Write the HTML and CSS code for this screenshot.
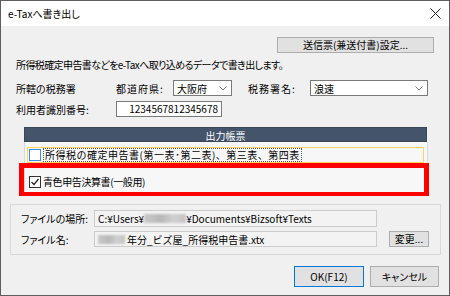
FILE: index.html
```html
<!DOCTYPE html>
<html lang="ja">
<head>
    <meta charset="UTF-8">
    <title>e-Taxへ書き出し</title>
    <link rel="stylesheet" href="styles.css">
</head>
<body>
    <div class="window">
        <div class="titlebar">
            <span class="title">e-Taxへ書き出し</span>
            <svg class="close" width="11" height="11" viewBox="0 0 11 11"><path d="M0.5 0.5 L10.5 10.5 M10.5 0.5 L0.5 10.5" stroke="#222" stroke-width="1"/></svg>
        </div>

        <div class="content">
            <div class="top">
                <div class="toprow">
                    <button class="btn btn-setting">送信票(兼送付書)設定...</button>
                </div>
                <p class="intro">所得税確定申告書などをe-Taxへ取り込めるデータで書き出します。</p>
                <div class="row">
                    <span class="label">所轄の税務署</span>
                    <span class="sublabel pref">都道府県:</span>
                    <div class="select sel-pref"><span>大阪府</span><svg width="8" height="5" viewBox="0 0 8 5"><path d="M0.5 0.5 L4 4 L7.5 0.5" fill="none" stroke="#777"/></svg></div>
                    <span class="sublabel office">税務署名:</span>
                    <div class="select sel-office"><span>浪速</span><svg width="8" height="5" viewBox="0 0 8 5"><path d="M0.5 0.5 L4 4 L7.5 0.5" fill="none" stroke="#777"/></svg></div>
                </div>
                <div class="row">
                    <span class="label">利用者識別番号:</span>
                    <div class="input userid">1234567812345678</div>
                </div>

                <div class="output">
                    <div class="output-head">出力帳票</div>
                    <div class="output-list">
                        <div class="item item-hover">
                            <span class="check"></span>
                            <span class="item-text focus">所得税の確定申告書(第一表･第二表)、第三表、第四表</span>
                        </div>
                        <div class="item item-checked">
                            <svg class="check-on" width="12" height="12" viewBox="0 0 12 12"><rect x="0.5" y="0.5" width="11" height="11" fill="#fff" stroke="#333"/><path d="M2.5 6 L5 8.5 L9.5 3" fill="none" stroke="#222" stroke-width="1.2"/></svg>
                            <span class="item-text">青色申告決算書(一般用)</span>
                        </div>
                    </div>
                    <div class="highlight"></div>
                </div>
            </div>

            <div class="group">
                <div class="grow">
                    <span class="glabel">ファイルの場所:</span>
                    <div class="field">C:¥Users¥<span class="blur blur-user"></span>¥Documents¥Bizsoft¥Texts</div>
                </div>
                <div class="grow">
                    <span class="glabel">ファイル名:</span>
                    <div class="field field-name"><span class="blur blur-year"></span>年分_ビズ屋_所得税申告書.xtx</div>
                    <button class="btn btn-change">変更...</button>
                </div>
            </div>

            <div class="actions">
                <button class="btn btn-ok">OK(F12)</button>
                <button class="btn btn-cancel">キャンセル</button>
            </div>
        </div>
    </div>
</body>
</html>
```

FILE: styles.css
```css
body {
    margin: 0;
    font-family: "Noto Sans CJK JP", "Noto Sans", sans-serif;
    font-size: 10px;
    color: #000;
    background: #fff;
}
.window {
    width: 450px;
    height: 296px;
    box-sizing: border-box;
    border: 1px solid #5e5e5e;
    background: #f0f0f0;
    display: flex;
    flex-direction: column;
}
.titlebar {
    height: 25px;
    background: #fff;
    display: flex;
    align-items: center;
    justify-content: space-between;
    padding: 0 7px 0 7px;
}
.title {
    font-size: 10px;
    font-feature-settings: "palt";
}
.close {
    margin-right: 1px;
}
.content {
    padding: 0 8px 0 9px;
    font-feature-settings: "palt";
}
.top {
    padding-left: 6px;
}
.toprow {
    display: flex;
    justify-content: flex-end;
    padding-top: 11px;
    padding-right: 7px;
}
.btn {
    font-family: inherit;
    font-size: 10px;
    font-feature-settings: "palt";
    background: #e1e1e1;
    border: 1px solid #adadad;
    color: #000;
    padding: 0;
    margin: 0;
    line-height: 1;
}
.btn-setting {
    width: 157px;
    height: 16px;
}
.intro {
    margin: 5px 0 0 0;
    height: 14px;
    line-height: 14px;
    letter-spacing: -0.6px;
}
.row {
    display: flex;
    align-items: center;
    height: 16px;
    margin-top: 8px;
}
.row + .row {
    margin-top: 5px;
}
.label {
    width: 100px;
}
.sublabel.pref {
    width: 57px;
    letter-spacing: 1px;
}
.sublabel.office {
    width: 62px;
    margin-left: 16px;
    letter-spacing: 1px;
}
.select {
    height: 16px;
    box-sizing: border-box;
    border: 1px solid #7a7a7a;
    background: #fff;
    display: flex;
    align-items: center;
    justify-content: space-between;
    padding: 0 4px 0 3px;
}
.sel-pref {
    width: 59px;
}
.sel-office {
    width: 118px;
}
.input {
    height: 16px;
    box-sizing: border-box;
    border: 1px solid #7a7a7a;
    background: #fff;
    line-height: 14px;
    text-align: right;
    padding-right: 3px;
}
.userid {
    width: 106px;
}

.output {
    position: relative;
    margin: 10px 0 0 8px;
    width: 404px;
}
.output-head {
    height: 15px;
    background: #44546a;
    color: #fff;
    text-align: center;
    line-height: 15px;
    margin-right: 1px;
    border: 1px solid #3a4656;
    box-sizing: border-box;
}
.output-list {
    height: 53px;
    border: 1px solid #d9d9d9;
    border-top: 0;
    background: #f7f7f7;
    padding: 5px 3px 0 2px;
    box-sizing: border-box;
}
.item {
    display: flex;
    align-items: center;
    height: 16px;
    gap: 2px;
}
.item-hover {
    border: 1px solid #ffd35c;
    box-sizing: border-box;
    padding-left: 1px;
}
.check {
    width: 12px;
    height: 12px;
    box-sizing: border-box;
    border: 1px solid #3d8ee6;
    background: #fff;
}
.item-text {
    line-height: 12px;
    font-feature-settings: normal;
    letter-spacing: 0.5px;
}
.focus {
    border: 1px dotted #555;
    padding: 0 1px;
}
.item-checked {
    margin-top: 11px;
    padding-left: 2px;
    gap: 2px;
}
.item-checked .item-text {
    letter-spacing: -0.4px;
}
.highlight {
    position: absolute;
    left: -5px;
    top: 36px;
    width: 410px;
    height: 33px;
    box-sizing: border-box;
    border: 5px solid #ff0000;
    border-bottom-width: 4px;
}

.group {
    margin-top: 9px;
    height: 51px;
    box-sizing: border-box;
    border: 1px solid #d9d9d9;
    padding: 5px 0 0 10px;
}
.grow {
    display: flex;
    align-items: center;
    height: 17px;
}
.grow + .grow {
    margin-top: 4px;
    height: 16px;
}
.glabel {
    width: 73px;
}
.field {
    width: 283px;
    height: 100%;
    box-sizing: border-box;
    border: 1px solid #cccccc;
    background: #f3f3f3;
    display: flex;
    align-items: center;
    padding-left: 3px;
    font-feature-settings: normal;
    white-space: nowrap;
}
.blur {
    display: inline-block;
    height: 9px;
    background: linear-gradient(90deg, #c9c9c9, #b8b8b8 40%, #d0d0d0 70%, #c4c4c4);
    filter: blur(1px);
}
.blur-user {
    width: 42px;
}
.blur-year {
    width: 27px;
    margin-right: 2px;
}
.btn-change {
    width: 40px;
    height: 16px;
    margin-left: 12px;
}
.actions {
    display: flex;
    justify-content: flex-end;
    gap: 6px;
    margin-top: 11px;
    padding-right: 2px;
}
.btn-ok {
    width: 70px;
    height: 21px;
    border-color: #0078d7;
}
.btn-cancel {
    width: 69px;
    height: 21px;
}
```
